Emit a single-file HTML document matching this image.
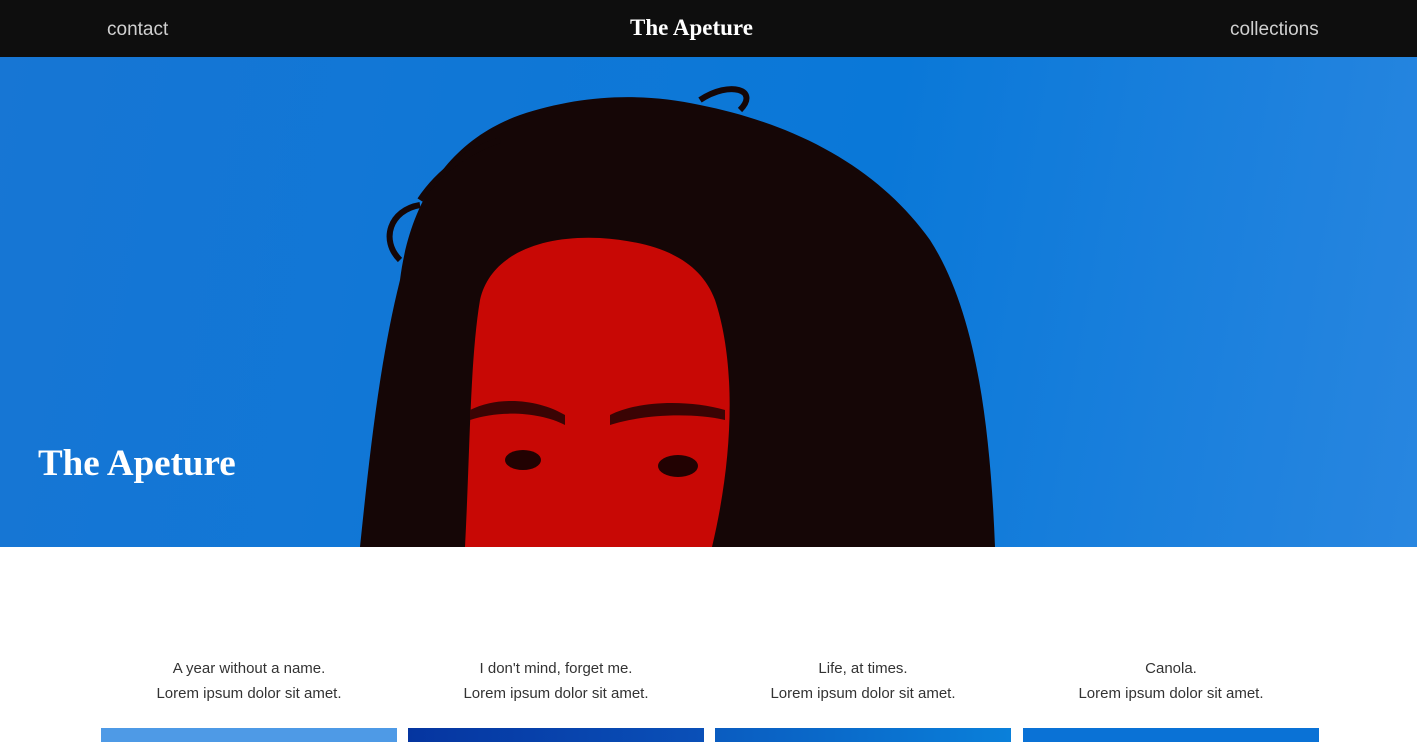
<!DOCTYPE html>
<html><head><style>
*{margin:0;padding:0;box-sizing:border-box}
body{width:1417px;height:742px;overflow:hidden;background:#fff;font-family:"Liberation Sans",sans-serif;position:relative}
.nav{position:absolute;top:0;left:0;width:1417px;height:57px;background:#0e0e0e;color:#ddd}
.nav a{position:absolute;top:19px;font-size:19px;color:#d0d0d0}
.logo{position:absolute;top:15px;left:0;width:1383px;text-align:center;font-family:"Liberation Serif",serif;font-weight:bold;font-size:23px;color:#fff}
.hero{position:absolute;top:57px;left:0;width:1417px;height:490px;overflow:hidden;background:linear-gradient(100deg,#1776d4,#0a78d8 60%,#2886e0)}
.ht{position:absolute;left:38px;top:385px;font-family:"Liberation Serif",serif;font-weight:bold;font-size:37px;color:#fff}
.col{position:absolute;top:656px;width:296px;text-align:center;font-size:15px;color:#333;line-height:25px}
.img{position:absolute;top:728px;width:296px;height:14px}
</style></head><body>
<div class="nav"><a style="left:107px">contact</a><div class="logo">The Apeture</div><a style="left:1230px">collections</a></div>
<div class="hero">
<svg width="1417" height="490" viewBox="0 57 1417 490" style="position:absolute;left:0;top:0">
<path d="M360 547 C370 450 380 360 400 280 C410 200 450 140 520 115 C580 95 640 92 700 105 C800 125 880 170 930 240 C975 310 990 420 995 547 Z" fill="#150606"/>
<path d="M420 200 C440 170 470 150 500 140 M400 260 C380 240 390 210 420 205 M740 110 C760 90 730 80 700 100" stroke="#150606" stroke-width="6" fill="none"/>
<path d="M465 547 C470 450 470 360 480 300 C490 255 540 235 600 238 C660 242 700 260 715 300 C735 360 735 450 712 547 Z" fill="#c80805"/>
<path d="M470 410 C500 395 540 400 565 415 L565 425 C540 412 500 410 470 420Z M610 415 C640 400 690 400 725 410 L725 420 C690 412 640 415 610 425Z" fill="#3a0404"/>
<ellipse cx="523" cy="460" rx="18" ry="10" fill="#220202"/>
<ellipse cx="678" cy="466" rx="20" ry="11" fill="#220202"/>
</svg>
<div class="ht">The Apeture</div>
</div>
<div class="col" style="left:101px">A year without a name.<br>Lorem ipsum dolor sit amet.</div>
<div class="col" style="left:408px">I don't mind, forget me.<br>Lorem ipsum dolor sit amet.</div>
<div class="col" style="left:715px">Life, at times.<br>Lorem ipsum dolor sit amet.</div>
<div class="col" style="left:1023px">Canola.<br>Lorem ipsum dolor sit amet.</div>
<div class="img" style="left:101px;background:#4e9ae6"></div>
<div class="img" style="left:408px;background:linear-gradient(90deg,#0535a0,#0a50b8)"></div>
<div class="img" style="left:715px;background:linear-gradient(90deg,#0a5cc0,#0a80da)"></div>
<div class="img" style="left:1023px;background:#0a72d6"></div>
</body></html>
